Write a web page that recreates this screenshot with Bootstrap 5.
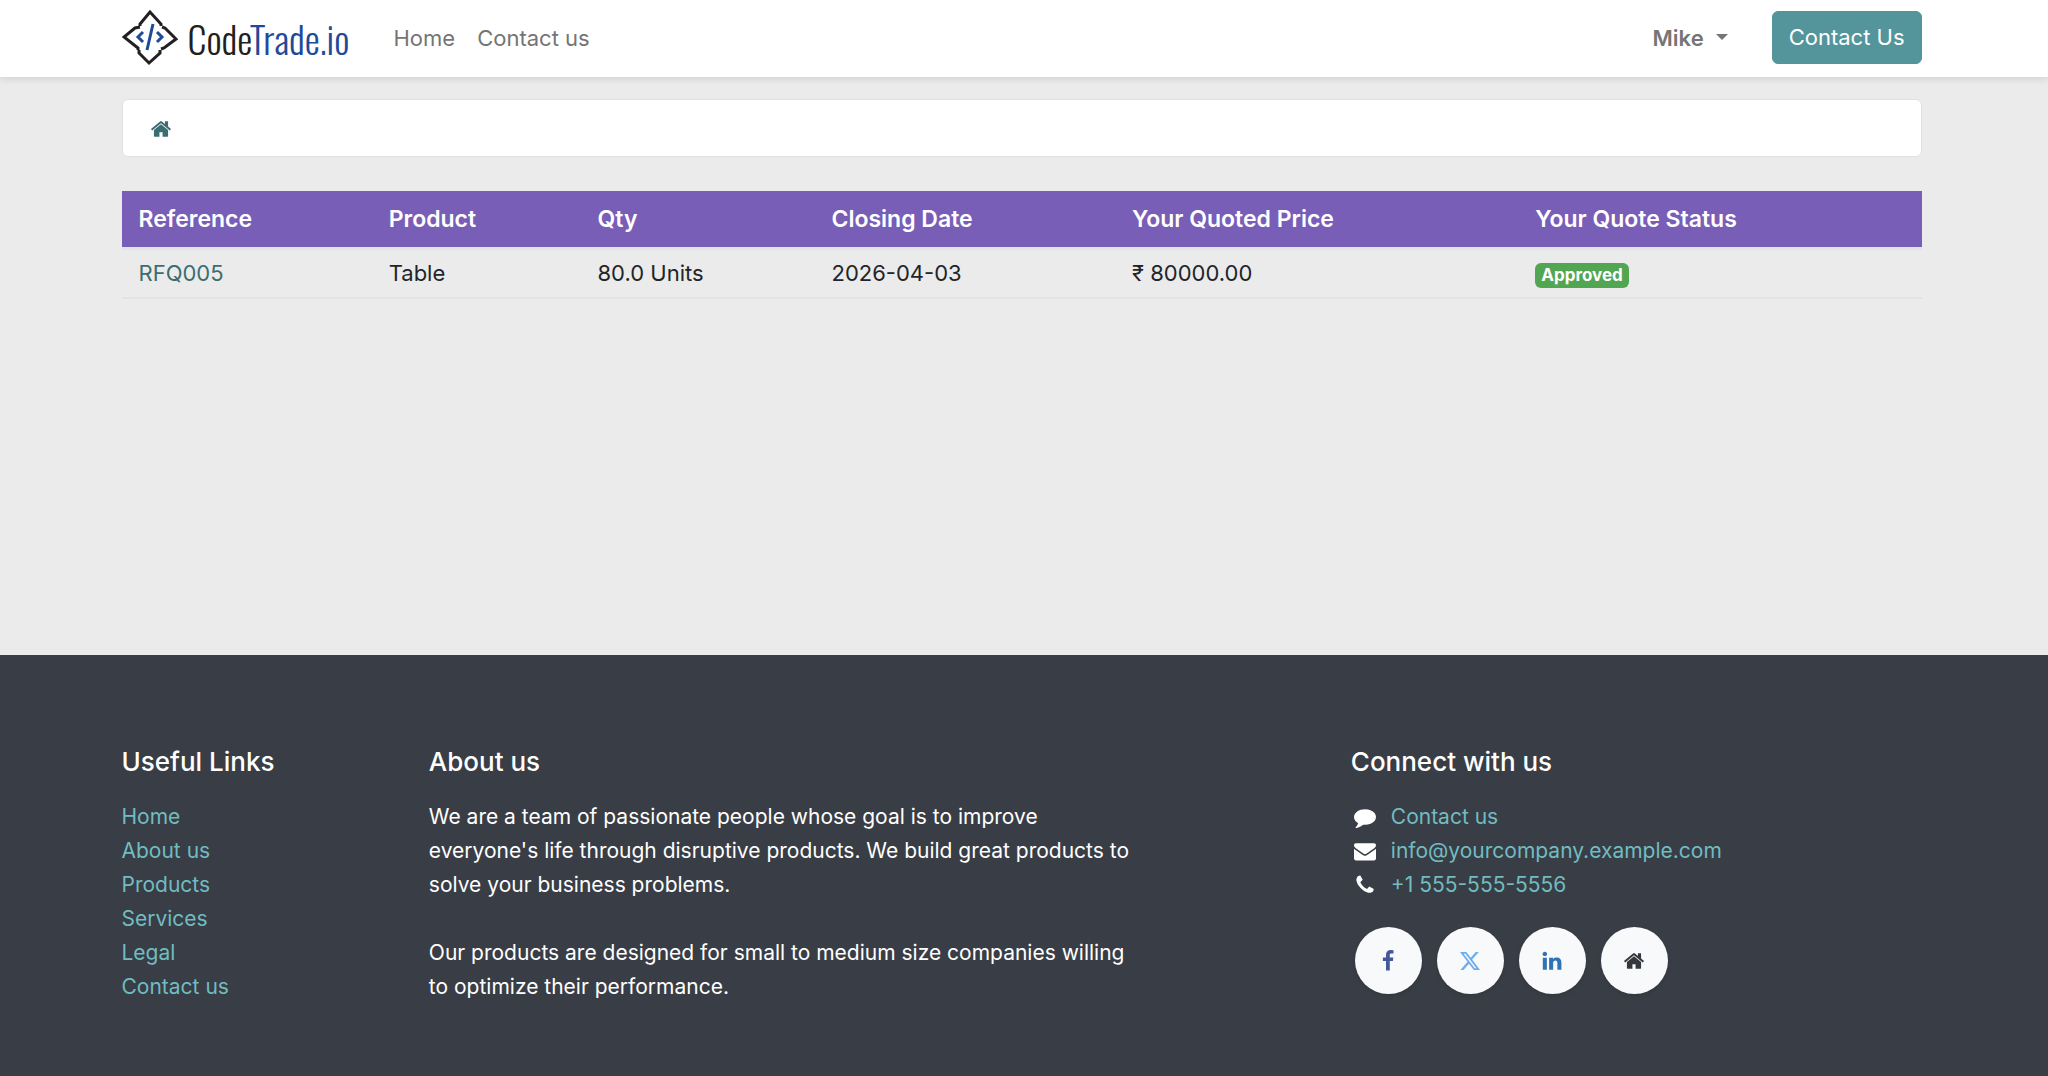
<!DOCTYPE html>
<html lang="en">
<head>
<meta charset="utf-8">
<meta name="viewport" content="width=device-width, initial-scale=1">
<title>RFQ | CodeTrade.io</title>
<link href="https://cdn.jsdelivr.net/npm/bootstrap@5.3.0/dist/css/bootstrap.min.css" rel="stylesheet">
<style>
  :root { --teal: #3b6e70; --teal-light: #71bcc1; --ink: #393d45; --rule: #e2e2e8; }
  body { font-family: Inter, "Noto Sans", sans-serif; font-size: 22px; line-height: 34px; color: #212529; background: #ebebeb; padding-right: 5px; min-height: 100vh; }
  a { text-decoration: none; }
  .site-width { max-width: 1848px; --bs-gutter-x: 48px; }
  .site-header { background: #fff; box-shadow: 0 3px 6px rgba(0,0,0,.09); margin-right: -5px; padding: 11px 5px 13px 0; }
  .site-nav { gap: 44px; }
  .brand { gap: 10px; }
  .brand svg { margin: -2px 0; }
  .brand-name { font-family: Oswald, "Liberation Sans", sans-serif; font-size: 38px; font-weight: 300; color: #231f20; }
  .brand-name span { color: #1f4a99; }
  .site-links { gap: 22px; }
  .site-header .nav-link { color: #757575; padding: 0; }
  .site-header .btn { background: #53959a; color: #fff; font-size: 22px; line-height: 33px; padding: 9px 16px; border: 1px solid #53959a; border-radius: 6px; }
  .user-menu { font-weight: 600; font-size: 22px; color: #757575; background: none; border: 0; padding: 0; }
  .user-menu::after { margin-left: 12px; }
  .trail { background: #fff; border: 1px solid #dee2e6; border-radius: 6px; padding: 18px 27px 16px; margin: 22px 0 34px; }
  .trail a { color: var(--teal); }
  .glyph { width: 22px; height: 22px; fill: currentColor; display: block; flex: none; }
  .rfq { --bs-table-bg: transparent; --bs-table-color: #212529; }
  .rfq th { background: #785eb7; color: #fff; font-size: 23px; font-weight: 600; padding: 11px 17px; border: 0; }
  .rfq td { padding: 6px 17px 7px; border-top: 3px solid var(--rule); border-bottom: 2px solid var(--rule); }
  .rfq a { color: var(--teal); }
  .rfq .badge { background: #52a551; font-size: 17px; font-weight: 700; line-height: 17px; padding: 4px 6px; border-radius: 6px; }
  .c-ref { width: 13.9%; } .c-product { width: 11.6%; } .c-qty { width: 13%; } .c-date { width: 16.7%; } .c-price { width: 22.4%; }
  .site-footer { background: var(--ink); color: #fff; font-size: 21px; margin-right: -5px; padding: 90px 5px 72px 0; }
  .site-footer .row { --bs-gutter-x: 44px; }
  .site-footer h2 { font-size: 26px; line-height: 34px; font-weight: 500; margin-bottom: 21px; }
  .site-footer p { margin-bottom: 34px; }
  .site-footer a { color: var(--teal-light); }
  .contact-list li { display: flex; align-items: center; gap: 15px; padding-left: 3px; }
  .socials { gap: 15px; margin: 25px 0 0 4px; }
  .socials a { width: 67px; height: 67px; background: #f8f9fa; box-shadow: 0 2px 4px rgba(0,0,0,.1); }
  .socials .facebook { color: #43589b; } .socials .x { color: #6cadee; } .socials .linkedin { color: #2f73b4; } .socials .homepage { color: #34383c; }
  .socials .x svg { width: 20px; height: 20px; }
</style>
<script defer src="https://cdn.jsdelivr.net/npm/bootstrap@5.3.0/dist/js/bootstrap.bundle.min.js"></script>
</head>
<body class="d-flex flex-column">
<svg class="d-none" aria-hidden="true">
  <symbol id="home" viewBox="0 0 1792 1792"><path d="M1472 992v480q0 26-19 45t-45 19h-384v-384h-256v384h-384q-26 0-45-19t-19-45v-480q0-1 .5-3t.5-3l575-474 575 474q1 2 1 6zm223-69l-62 74q-8 9-21 11h-3q-13 0-21-7l-692-577-692 577q-12 8-24 7-13-2-21-11l-62-74q-8-10-7-23.5t11-21.5l719-599q32-26 76-26t76 26l244 204v-195q0-14 9-23t23-9h192q14 0 23 9t9 23v408l219 182q10 8 11 21.5t-7 23.5z"/></symbol>
</svg>
<header class="site-header">
  <nav class="container site-width site-nav d-flex align-items-center" aria-label="Main">
    <a href="#" class="brand d-flex align-items-center">
      <svg width="56" height="57" viewBox="0 0 56 57" fill="none" stroke="#231f20" stroke-width="3" aria-hidden="true">
        <path d="M18 17V15L28 3L39 15V17"/><path d="M18 18L13 19L2 28L16 39V41"/><path d="M40 18L43 19L54 30L42 39L39 40"/><path d="M17 41V44L27 54L38 44V41"/>
        <path stroke="#1f4a99" d="M21 23L16 28L21 33M35 23L40 28L35 33M31 15L25 41"/>
      </svg>
      <span class="brand-name">Code<span>Trade.io</span></span>
    </a>
    <ul class="nav site-links me-auto">
      <li><a class="nav-link" href="#">Home</a></li>
      <li><a class="nav-link" href="#">Contact us</a></li>
    </ul>
    <div class="dropdown"><button class="user-menu dropdown-toggle" type="button" data-bs-toggle="dropdown">Mike</button></div>
    <button type="button" class="btn">Contact Us</button>
  </nav>
</header>
<main class="container site-width flex-grow-1">
  <nav class="trail d-flex align-items-center" aria-label="Breadcrumb"><a href="#" aria-label="Home"><svg class="glyph"><use href="#home"/></svg></a></nav>
  <table class="table rfq mb-0">
    <colgroup><col class="c-ref"><col class="c-product"><col class="c-qty"><col class="c-date"><col class="c-price"><col></colgroup>
    <thead><tr><th>Reference</th><th>Product</th><th>Qty</th><th>Closing Date</th><th>Your Quoted Price</th><th>Your Quote Status</th></tr></thead>
    <tbody><tr><td><a href="#">RFQ005</a></td><td>Table</td><td>80.0 Units</td><td>2026-04-03</td><td>₹ 80000.00</td><td><span class="badge">Approved</span></td></tr></tbody>
  </table>
</main>
<footer class="site-footer">
  <div class="container site-width"><div class="row">
    <div class="col-2">
      <h2>Useful Links</h2>
      <ul class="list-unstyled mb-0">
        <li><a href="#">Home</a></li>
        <li><a href="#">About us</a></li>
        <li><a href="#">Products</a></li>
        <li><a href="#">Services</a></li>
        <li><a href="#">Legal</a></li>
        <li><a href="#">Contact us</a></li>
      </ul>
    </div>
    <div class="col-5">
      <h2>About us</h2>
      <p>We are a team of passionate people whose goal is to improve<br>everyone's life through disruptive products. We build great products to solve your business problems.</p>
      <p class="mb-0">Our products are designed for small to medium size companies willing<br>to optimize their performance.</p>
    </div>
    <div class="col-4 offset-1">
      <h2>Connect with us</h2>
      <ul class="list-unstyled contact-list mb-0">
        <li><svg class="glyph" viewBox="0 0 1792 1792" aria-hidden="true"><path d="M1792 896q0 174-120 321.5t-326 233-450 85.5q-70 0-145-8-198 175-460 242-49 14-114 22-17 2-30.5-9t-17.5-29v-1q-3-4-.5-12t2-10 4.5-9.5l6-9 7-8.5 8-9q7-8 31-34.5t34.5-38 31-39.5 32.5-51 27-59 26-76q-157-89-247.5-220t-90.5-281q0-130 71-248.5t191-204.5 286-136.5 348-50.5q244 0 450 85.5t326 233 120 321.5z"/></svg><a href="#">Contact us</a></li>
        <li><svg class="glyph" viewBox="0 0 1792 1792" aria-hidden="true"><path d="M1792 710v794q0 66-47 113t-113 47h-1472q-66 0-113-47t-47-113v-794q44 49 101 87 362 246 497 345 57 42 92.5 65.5t94.5 48 110 24.5h2q51 0 110-24.5t94.5-48 92.5-65.5q170-123 498-345 57-39 100-87zm0-294q0 79-49 151t-122 123q-376 261-468 325-10 7-42.5 31t-54 38.5-52 32.5-57.5 27-50 9h-2q-23 0-50-9t-57.5-27-52-32.5-54-38.5-42.5-31q-91-64-262-182.5t-205-142.5q-62-42-117-115.5t-55-136.5q0-78 41.5-130t118.5-52h1472q65 0 112.5 47t47.5 113z"/></svg><a href="#">info@yourcompany.example.com</a></li>
        <li><svg class="glyph" viewBox="0 0 1792 1792" aria-hidden="true"><path d="M1600 1240q0 27-10 70.5t-21 68.5q-21 50-122 106-94 51-186 51-27 0-53-3.5t-57.5-12.5-47-14.5-55.5-20.5-49-18q-98-35-175-83-127-79-264-216t-216-264q-48-77-83-175-3-9-18-49t-20.5-55.5-14.5-47-12.5-57.5-3.5-53q0-92 51-186 56-101 106-122 25-11 68.5-21t70.5-10q14 0 21 3 18 6 53 76 11 19 30 54t35 63.5 31 53.5q3 4 17.5 25t21.5 35.5 7 28.5q0 20-28.5 50t-62 55-62 53-28.5 46q0 9 5 22.5t8.5 20.5 14 24 11.5 19q76 137 174 235t235 174q2 1 19 11.5t24 14 20.5 8.5 22.5 5q18 0 46-28.5t53-62 55-62 50-28.5q14 0 28.5 7t35.5 21.5 25 17.5q25 15 53.5 31t63.5 35 54 30q70 35 76 53 3 7 3 21z"/></svg><a href="#">+1 555-555-5556</a></li>
      </ul>
      <div class="socials d-flex">
        <a href="#" class="facebook rounded-circle d-flex align-items-center justify-content-center" aria-label="Facebook"><svg class="glyph" viewBox="0 0 1792 1792"><path d="M1343 12v264h-157q-86 0-116 36t-30 108v189h293l-39 296h-254v759h-306v-759h-255v-296h255v-218q0-186 104-288.5t277-102.5q147 0 228 12z"/></svg></a>
        <a href="#" class="x rounded-circle d-flex align-items-center justify-content-center" aria-label="X"><svg class="glyph" viewBox="0 0 16 16"><path d="M12.6.75h2.454l-5.36 6.142L16 15.25h-4.937l-3.867-5.07-4.425 5.07H.316l5.733-6.57L0 .75h5.063l3.495 4.633L12.601.75Zm-.86 13.028h1.36L4.323 2.145H2.865z"/></svg></a>
        <a href="#" class="linkedin rounded-circle d-flex align-items-center justify-content-center" aria-label="LinkedIn"><svg class="glyph" viewBox="0 0 1792 1792"><path d="M477 625v991h-330v-991h330zm21-306q1 73-50.5 122t-135.5 49h-2q-82 0-132-49t-50-122q0-74 51.5-122.5t134.5-48.5 133 48.5 51 122.5zm1166 729v568h-329v-530q0-105-40.5-164.5t-126.5-59.5q-63 0-105.5 34.5t-63.5 85.5q-11 30-11 81v553h-329q2-399 2-647t-1-296l-1-48h329v144h-2q20-32 41-56t56.5-52 87-43.5 114.5-15.5q171 0 275 113.5t104 332.5z"/></svg></a>
        <a href="#" class="homepage rounded-circle d-flex align-items-center justify-content-center" aria-label="Website"><svg class="glyph"><use href="#home"/></svg></a>
      </div>
    </div>
  </div></div>
</footer>
</body>
</html>
